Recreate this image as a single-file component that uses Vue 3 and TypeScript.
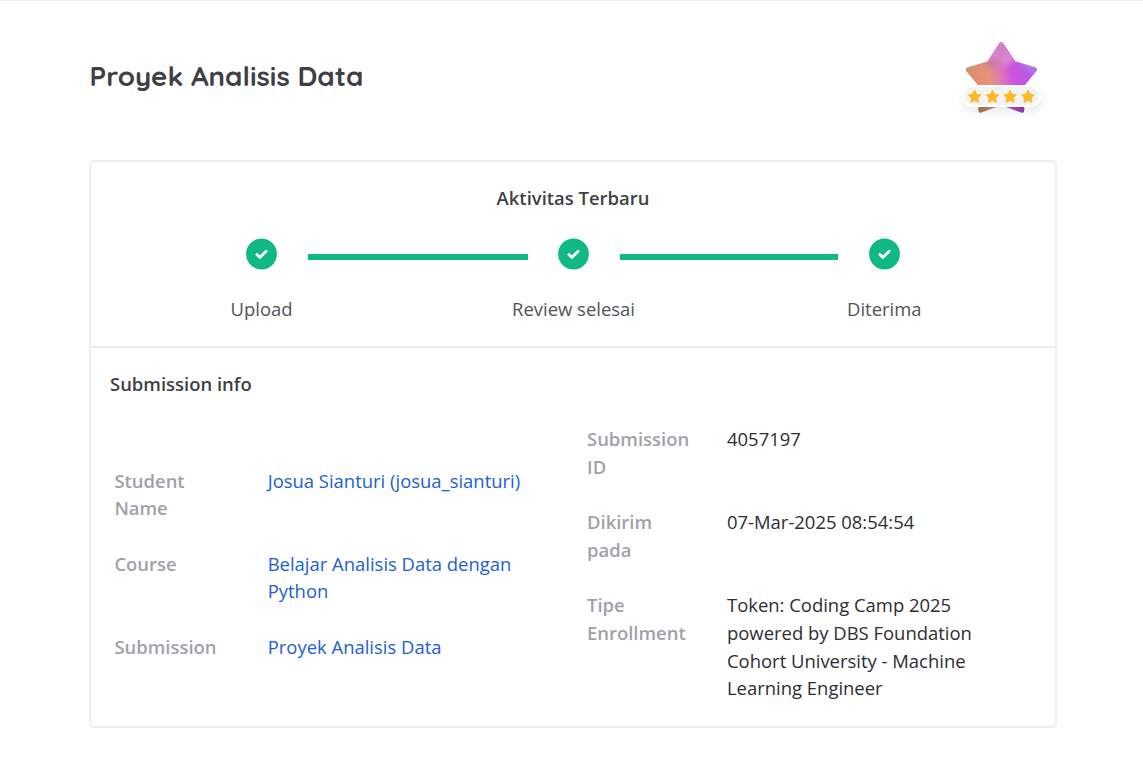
<script setup lang="ts">
interface Row { label: string[]; value: string[]; link?: boolean }

const steps: string[] = ['Upload', 'Review selesai', 'Diterima']
const starOffsets: number[] = [0, 17.8, 35.5, 53.3]

const left: Row[] = [
  { label: ['Student', 'Name'], value: ['Josua Sianturi (josua_sianturi)'], link: true },
  { label: ['Course'], value: ['Belajar Analisis Data dengan', 'Python'], link: true },
  { label: ['Submission'], value: ['Proyek Analisis Data'], link: true },
]
const right: Row[] = [
  { label: ['Submission', 'ID'], value: ['4057197'] },
  { label: ['Dikirim', 'pada'], value: ['07-Mar-2025 08:54:54'] },
  {
    label: ['Tipe', 'Enrollment'],
    value: ['Token: Coding Camp 2025', 'powered by DBS Foundation', 'Cohort University - Machine', 'Learning Engineer'],
  },
]
</script>

<template>
  <main class="page">
    <header class="header">
      <h1 class="title">Proyek Analisis Data</h1>
      <svg class="badge" width="104" height="96" viewBox="950 30 104 96">
        <defs>
          <linearGradient id="base" x1="968" y1="82" x2="1037" y2="66" gradientUnits="userSpaceOnUse">
            <stop offset="0" stop-color="#e08468" />
            <stop offset="0.3" stop-color="#e8937a" />
            <stop offset="0.47" stop-color="#dc78b4" />
            <stop offset="0.64" stop-color="#cb52e0" />
            <stop offset="1" stop-color="#b05ee0" />
          </linearGradient>
          <radialGradient id="top" cx="1001" cy="50" r="21" gradientUnits="userSpaceOnUse">
            <stop offset="0" stop-color="#cf80c2" />
            <stop offset="0.6" stop-color="#df8cd2" stop-opacity="0.85" />
            <stop offset="1" stop-color="#dd80cc" stop-opacity="0" />
          </radialGradient>
          <linearGradient id="edge" x1="966" y1="64" x2="980" y2="76" gradientUnits="userSpaceOnUse">
            <stop offset="0" stop-color="#b99a70" />
            <stop offset="1" stop-color="#dc9a78" stop-opacity="0" />
          </linearGradient>
          <linearGradient id="feet" x1="978" y1="0" x2="1025" y2="0" gradientUnits="userSpaceOnUse">
            <stop offset="0" stop-color="#a3694a" />
            <stop offset="0.3" stop-color="#b98070" />
            <stop offset="0.7" stop-color="#a850b4" />
            <stop offset="1" stop-color="#8a349f" />
          </linearGradient>
          <clipPath id="star">
            <path d="M999.4 43Q1001.2 40.8 1003 43L1015.4 61.4L1035.3 67.4Q1037.8 68.6 1036.4 71L1023.2 87.3L1024.3 110.6Q1024.2 113.2 1021.6 112.8L1001.2 105.3L980.8 112.8Q978.2 113.2 978.3 110.6L979.6 87.3L966.2 71Q965 68.5 967.5 67.4L987.4 61.4Z" />
          </clipPath>
          <filter id="soft" x="-30%" y="-70%" width="160%" height="260%">
            <feGaussianBlur stdDeviation="4" />
          </filter>
          <filter id="blend" x="-60%" y="-60%" width="220%" height="220%">
            <feGaussianBlur stdDeviation="2.5" />
          </filter>
        </defs>
        <rect x="963" y="91" width="79" height="21" rx="10" fill="#000" opacity=".08" filter="url(#soft)" />
        <g clip-path="url(#star)">
          <rect x="960" y="35" width="84" height="55" fill="url(#base)" />
          <rect x="960" y="35" width="84" height="55" fill="url(#top)" />
          <rect x="960" y="60" width="30" height="25" fill="url(#edge)" />
          <path d="M1040 62L1018 61L1027 70L1040 76Z" fill="#ab78e8" filter="url(#blend)" />
          <path d="M982 64L992 58L1006 63L990 67Z" fill="#b8708c" opacity=".6" filter="url(#blend)" />
          <rect x="960" y="100" width="84" height="16" fill="url(#feet)" />
        </g>
        <rect x="961.8" y="85" width="79.5" height="22" rx="11" fill="#fff" />
        <rect x="964.3" y="87" width="74.5" height="18" rx="9" fill="#f3f3f4" />
        <path
          v-for="x in starOffsets"
          :key="x"
          :transform="`translate(${x} -0.3)`"
          d="M974.6 90.4L976.7 94.5L981 95.2L977.9 98.4L978.6 102.8L974.6 100.8L970.6 102.8L971.3 98.4L968.2 95.2L972.5 94.5Z"
          fill="#fdb924" stroke="#fdb924" stroke-width=".8" stroke-linejoin="round"
        />
      </svg>
    </header>

    <section class="card">
      <div class="activity">
        <h2 class="heading">Aktivitas Terbaru</h2>
        <ol class="steps">
          <template v-for="(s, i) in steps" :key="s">
            <li v-if="i > 0" class="line"></li>
            <li class="step">
              <svg width="31" height="32" viewBox="0 0 31 32">
                <circle cx="15.5" cy="16" r="15.4" fill="#10b981" />
                <path d="M10.9 16.5L13.9 19.4L20.1 13.2" fill="none" stroke="#fff" stroke-width="2.8" stroke-linecap="round" stroke-linejoin="round" />
              </svg>
              <span class="caption">{{ s }}</span>
            </li>
          </template>
        </ol>
      </div>
      <div class="info">
        <h2 class="heading">Submission info</h2>
        <div class="columns">
          <dl v-for="(rows, c) in [left, right]" :key="c" class="list" :class="c ? 'list-right' : 'list-left'">
            <div v-for="r in rows" :key="r.label[0]" class="row">
              <dt><span v-for="t in r.label" :key="t">{{ t }}</span></dt>
              <dd :class="{ link: r.link }"><span v-for="t in r.value" :key="t">{{ t }}</span></dd>
            </div>
          </dl>
        </div>
      </div>
    </section>
  </main>
</template>

<style>
body { background: #fff; }
</style>

<style scoped>
* { box-sizing: border-box; margin: 0; padding: 0; }
.page {
  height: 758px; overflow: hidden; padding: 0 86px 0 89px; border-top: 1px solid #f0f0f0;
  font-family: "Open Sans", sans-serif; font-size: 18.46px; line-height: 27.7px; color: #2d2d33;
}
.header { height: 159px; display: flex; justify-content: space-between; padding-top: 29px; }
.title {
  margin: 28px 0 0 .6px; font-family: Quicksand, Lato, sans-serif; font-size: 27.7px; line-height: 36px;
  font-weight: 700; color: #3f3f46; white-space: nowrap;
}
.badge { margin-right: 3px; flex: none; }
.card { height: 568px; border: 2px solid #ebebeb; border-left-color: #eee; border-right-color: #eee; border-radius: 5px; }
.activity { height: 186px; border-bottom: 2px solid #ebebeb; padding-top: 22px; }
.heading { font-size: 18.44px; line-height: 28px; font-weight: 600; color: #3f3f46; }
.activity .heading { text-align: center; }
.steps { display: flex; list-style: none; margin-top: 26px; padding-left: 155px; }
.step { width: 31px; display: flex; flex-direction: column; align-items: center; }
.step svg { display: block; flex: none; }
.caption { margin-top: 25px; white-space: nowrap; color: #52525b; }
.line { width: 220px; height: 6px; margin: 16px 30.5px 0; background: #10b981; }
.line:nth-child(4) { width: 218px; margin-right: 31.3px; }
.info { padding: 22px 18px 0 19px; }
.columns { display: flex; margin-top: 27px; }
.list { display: flex; flex-direction: column; gap: 27.7px; }
.list-left { width: 477px; padding: 41.5px 0 0 4.4px; }
.row { display: flex; white-space: nowrap; min-height: 55.4px; }
dt { font-weight: 600; color: #a1a1aa; }
.list-left dt { width: 153.3px; }
.list-right dt { width: 140px; }
dt span, dd span { display: block; }
.link { color: #2160d4; }
</style>
